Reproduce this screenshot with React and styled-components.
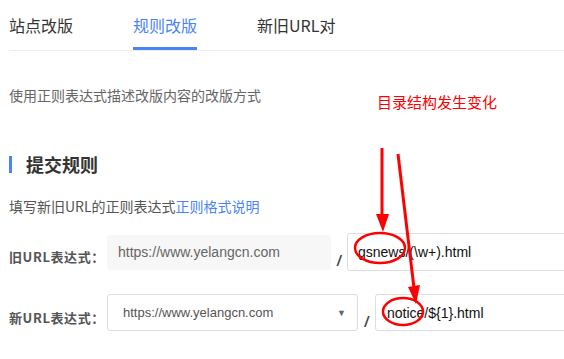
import React from "react";
import styled, { createGlobalStyle } from "styled-components";

const Global = createGlobalStyle`
  html, body { margin: 0; padding: 0; background: #fff; overflow: hidden; }
  body { font-family: "Noto Sans CJK SC", "Noto Sans", sans-serif; }
`;

const Page = styled.div`
  position: relative;
  width: 760px;
  height: 359px;
  padding-left: 9px;
  box-sizing: border-box;
`;

const TabBar = styled.div`
  display: flex;
  border-bottom: 1px solid #ececec;
`;

const Tab = styled.div`
  font-size: 16px;
  line-height: 24px;
  padding: 13px 0 10px;
  margin-right: 60px;
  color: ${(p) => (p.$active ? "#4a84f5" : "#333")};
  border-bottom: 3px solid ${(p) => (p.$active ? "#4a84f5" : "transparent")};
`;

const Desc = styled.p`
  margin: 34px 0 0;
  font-size: 14px;
  line-height: 20px;
  color: #666;
`;

const Note = styled.div`
  position: absolute;
  left: 377px;
  top: 92px;
  font-size: 15px;
  line-height: 20px;
  color: #ff0000;
`;

const Heading = styled.h2`
  display: flex;
  align-items: center;
  gap: 14px;
  margin: 47px 0 0;
  font-size: 18px;
  line-height: 24px;
  font-weight: 700;
  color: #333;
  &::before {
    content: "";
    width: 3px;
    height: 17px;
    background: #4a84f5;
  }
`;

const Hint = styled.p`
  margin: 20px 0 0;
  font-size: 14px;
  line-height: 20px;
  color: #555;
`;

const Link = styled.span`
  color: #4a84f5;
`;

const Row = styled.div`
  display: flex;
  align-items: center;
  margin-top: ${(p) => p.$mt}px;
`;

const Label = styled.div`
  width: 98px;
  flex: none;
  white-space: nowrap;
  padding-top: 10px;
  font-size: 13px;
  letter-spacing: 0.6px;
  font-weight: 700;
  color: #555;
  line-height: 20px;
`;

const Field = styled.div`
  box-sizing: border-box;
  flex: none;
  display: flex;
  align-items: center;
  white-space: nowrap;
  width: ${(p) => p.$w}px;
  height: ${(p) => p.$h}px;
  padding-left: ${(p) => p.$pl}px;
  padding-right: 10px;
  border-radius: 3px;
  background: ${(p) => (p.$muted ? "#f7f7f7" : "#fff")};
  border: 1px solid ${(p) => (p.$muted ? "#f7f7f7" : "#dedede")};
  font-family: "Liberation Sans", Arial, sans-serif;
  font-size: ${(p) => p.$fs}px;
  color: ${(p) => p.$color};
`;

const FieldText = styled.span`
  flex: 1;
`;

const Caret = styled.span`
  font-size: 9px;
  color: #666;
  margin-right: 1px;
`;

const Slash = styled.div`
  width: ${(p) => p.$w}px;
  flex: none;
  text-align: center;
  padding-top: 18px;
  font-family: "Liberation Sans", Arial, sans-serif;
  font-size: 14px;
  font-weight: 700;
  color: #444;
  font-style: italic;
`;

const Overlay = styled.svg`
  position: absolute;
  left: 0;
  top: 0;
  pointer-events: none;
`;

export default function App() {
  return (
    <>
      <Global />
      <Page>
        <TabBar>
          <Tab>站点改版</Tab>
          <Tab $active>规则改版</Tab>
          <Tab>新旧URL对</Tab>
        </TabBar>
        <Desc>使用正则表达式描述改版内容的改版方式</Desc>
        <Note>目录结构发生变化</Note>
        <Heading>提交规则</Heading>
        <Hint>
          填写新旧URL的正则表达式<Link>正则格式说明</Link>
        </Hint>
        <Row $mt={17}>
          <Label>旧URL表达式：</Label>
          <Field $w={224} $h={35} $pl={10} $muted $fs={14} $color="#666">
            <FieldText>https://www.yelangcn.com</FieldText>
          </Field>
          <Slash $w={16}>/</Slash>
          <Field $w={300} $h={38} $pl={10} $fs={14} $color="#111">
            <FieldText>gsnews/(\w+).html</FieldText>
          </Field>
        </Row>
        <Row $mt={23}>
          <Label>新URL表达式：</Label>
          <Field $w={251} $h={37} $pl={15} $fs={13} $color="#555">
            <FieldText>https://www.yelangcn.com</FieldText>
            <Caret>▼</Caret>
          </Field>
          <Slash $w={17}>/</Slash>
          <Field $w={300} $h={37} $pl={11} $fs={14} $color="#111">
            <FieldText>notice/${"{1}"}.html</FieldText>
          </Field>
        </Row>
        <Overlay width="564" height="359" viewBox="0 0 564 359">
          <line x1="382" y1="148" x2="382" y2="216" stroke="#ff0000" strokeWidth="3" />
          <polygon points="376,214 389,214 383,232" fill="#ff0000" />
          <line x1="398" y1="154" x2="414" y2="288" stroke="#ff0000" strokeWidth="3" />
          <polygon points="420,285 408,287 416,304" fill="#ff0000" />
          <ellipse cx="380" cy="248" rx="25" ry="15" fill="none" stroke="#ff0000" strokeWidth="2.5" />
          <ellipse cx="403" cy="311.5" rx="20" ry="13.5" fill="none" stroke="#ff0000" strokeWidth="2.5" />
        </Overlay>
      </Page>
    </>
  );
}
